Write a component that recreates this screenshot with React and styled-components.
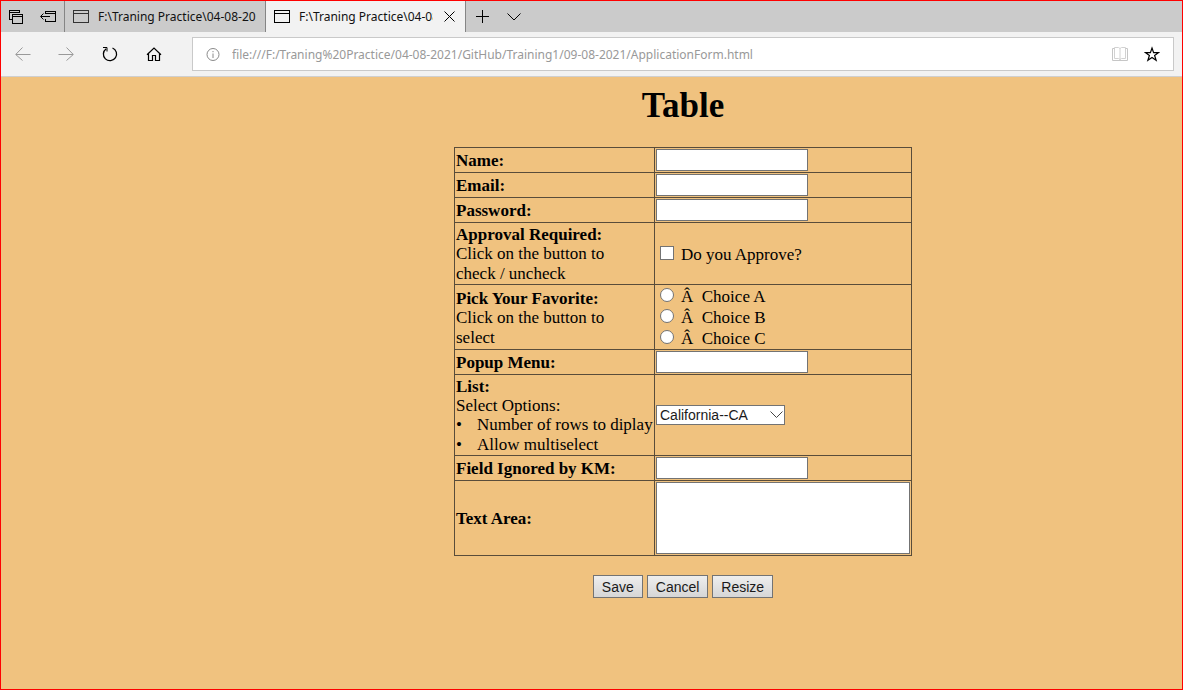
import React from "react";
import styled, { createGlobalStyle } from "styled-components";

const GlobalStyle = createGlobalStyle`
  *, *::before, *::after { box-sizing: border-box; }
  body { margin: 0; }
`;

const uiFont = `"Noto Sans", "Open Sans", sans-serif`;
const formFont = `"Liberation Serif", "Times New Roman", serif`;
const controlFont = `"Liberation Sans", Arial, sans-serif`;

const Window = styled.div`
  min-height: 100vh;
  display: flex;
  flex-direction: column;
  border: 1px solid #ff0000;
  background: #f0c27f;
  overflow: hidden;
`;

const TabStrip = styled.header`
  display: flex;
  height: 31px;
  background: #cbcbcb;
`;

const IconButton = styled.button`
  display: flex;
  align-items: center;
  justify-content: center;
  flex: none;
  width: ${(p) => p.$width || 32}px;
  height: ${(p) => p.$height || 31}px;
  padding: 0;
  border: 0;
  background: none;
  color: ${(p) => p.$color || "#000"};
`;

const Tab = styled.div`
  display: flex;
  align-items: center;
  flex: none;
  width: 201px;
  padding-left: 8px;
  border-left: 1px solid #858585;
  border-right: ${(p) => (p.$active ? "1px solid #858585" : "0")};
  background: ${(p) => (p.$active ? "#f2f2f2" : "#cbcbcb")};
  color: ${(p) => (p.$active ? "#000" : "#333")};
`;

const TabTitle = styled.span`
  width: ${(p) => p.$width}px;
  margin-left: 9px;
  overflow: hidden;
  white-space: nowrap;
  color: #111;
  font: 12px/20px ${uiFont};
`;

const Toolbar = styled.nav`
  display: flex;
  align-items: center;
  height: 45px;
  padding-right: 8px;
  background: #f2f2f2;
  border-bottom: 1px solid #cfcfcf;
`;

const NavButtons = styled.div`
  display: flex;
  flex: none;
  width: 191px;
`;

const AddressBar = styled.div`
  display: flex;
  align-items: center;
  flex: 1;
  min-width: 0;
  height: 34px;
  padding: 0 5px 0 13px;
  border: 1px solid #c9c9c9;
  background: #fff;
`;

const AddressInput = styled.input`
  flex: 1;
  min-width: 0;
  height: 22px;
  margin-left: 12px;
  padding: 0;
  border: 0;
  outline: 0;
  background: none;
  color: #999;
  font: 12px/20px ${uiFont};
`;

const Page = styled.main`
  flex: 1;
  display: flex;
  flex-direction: column;
  align-items: center;
  padding: 8px 0 8px 183px;
  color: #000;
  font: 17px/19px ${formFont};
`;

const Title = styled.h1`
  margin: 0 0 20px;
  font-size: 35px;
  line-height: 42px;
`;

const Form = styled.form`
  display: flex;
  flex-direction: column;
  align-items: center;
  gap: 19px;
`;

const Table = styled.table`
  width: 458px;
  table-layout: fixed;
  border-collapse: collapse;
`;

const Col = styled.col`
  width: ${(p) => p.$width}px;
`;

const HeadCell = styled.th`
  padding: ${(p) => (p.$tall ? "2px 0 0 1px" : "1px 0 1px 1px")};
  border: 1px solid #594c3a;
  font-weight: normal;
  text-align: left;
  vertical-align: middle;
`;

const FieldCell = styled.td`
  padding: ${(p) => (p.$tight ? "0 1px 1px" : "1px")};
  border: 1px solid #594c3a;
  vertical-align: middle;
`;

const FieldName = styled.label`
  display: block;
  font-weight: bold;
`;

const Hint = styled.p`
  margin: 0;
  width: 160px;
  line-height: 20px;
`;

const Options = styled.ul`
  margin: 0;
  padding: 0;
  list-style: none;
  line-height: 20px;
  white-space: nowrap;
`;

const Option = styled.li`
  display: flex;
  &::before {
    content: "•";
    width: 21px;
  }
`;

const TextInput = styled.input`
  display: block;
  width: 152px;
  height: 22px;
  padding: 1px 3px;
  border: 1px solid #737373;
  border-radius: 0;
  outline: 0;
  background: #fff;
  font: 14px ${controlFont};
`;

const TextArea = styled.textarea`
  display: block;
  width: 100%;
  height: 72px;
  border: 1px solid #737373;
  border-radius: 0;
  outline: 0;
  resize: none;
  background: #fff;
  font: 14px ${controlFont};
`;

const Choice = styled.label`
  display: flex;
  align-items: center;
  height: 21px;
  padding: 2px 0 0 4px;
  white-space: pre;
`;

const Tick = styled.input`
  appearance: none;
  flex: none;
  width: 14px;
  height: 14px;
  margin: 0 7px 4px 0;
  border: 1px solid #737373;
  border-radius: ${(p) => (p.type === "radio" ? "50%" : "0")};
  background: #fff;
`;

const SelectBox = styled.div`
  display: grid;
  align-items: center;
  width: 129px;
  height: 20px;
  & > * { grid-area: 1 / 1; }
  & > svg {
    justify-self: end;
    margin-right: 2px;
    pointer-events: none;
  }
`;

const Select = styled.select`
  appearance: none;
  width: 100%;
  height: 20px;
  padding: 0 3px;
  border: 1px solid #737373;
  border-radius: 0;
  background: #fff;
  color: #1a1a1a;
  font: 14px/16px ${controlFont};
`;

const Actions = styled.div`
  display: flex;
  gap: 4px;
`;

const Button = styled.button`
  height: 23px;
  padding: 0 8px;
  border: 1px solid #737373;
  border-radius: 0;
  background: linear-gradient(#eeeeee, #d6d6d6);
  color: #1a1a1a;
  font: 14px/20px ${controlFont};
`;

const Icon = ({ w = 16, h = 16, children, ...rest }) => (
  <svg width={w} height={h} viewBox={`0 0 ${w} ${h}`} fill="none" stroke="currentColor" aria-hidden="true" {...rest}>
    {children}
  </svg>
);

const PageIcon = () => (
  <Icon w={16} h={14} shapeRendering="crispEdges">
    <path d="M.5.5h15v12H.5zM0 3.5h16" />
  </Icon>
);

function Row({ id, name, note, tight, plain, children }) {
  return (
    <tr>
      <HeadCell scope="row" $tall={Boolean(note)}>
        <FieldName as={plain ? "div" : "label"} htmlFor={plain ? undefined : id}>{name}</FieldName>
        {note}
      </HeadCell>
      <FieldCell $tight={tight}>{children}</FieldCell>
    </tr>
  );
}

export default function App() {
  return (
    <Window>
      <GlobalStyle />
      <TabStrip>
        <IconButton $width={30} aria-label="Tabs you've set aside">
          <Icon w={14} h={14} shapeRendering="crispEdges">
            <path d="M3 9.500H.5V.5h10V3M.5 2.500h10M3.500 4.500h10v9h-10zM3.500 6.500h10" />
          </Icon>
        </IconButton>
        <IconButton $width={33} aria-label="Set these tabs aside">
          <Icon w={16} h={12}>
            <path d="M5.500 3V.5h10v10h-10V8M5.500 2.500h10M.5 5.500H10" shapeRendering="crispEdges" />
            <path d="M3.500 2.500l-3 3 3 3" />
          </Icon>
        </IconButton>
        <Tab>
          <PageIcon />
          <TabTitle $width={158}>F:\Traning Practice\04-08-2021</TabTitle>
        </Tab>
        <Tab $active>
          <PageIcon />
          <TabTitle $width={134}>F:\Traning Practice\04-08-2021</TabTitle>
          <IconButton $width={32} aria-label="Close tab">
            <Icon w={11} h={11}><path d="M.5.5l10 10M10.500.5l-10 10" /></Icon>
          </IconButton>
        </Tab>
        <IconButton aria-label="New tab">
          <Icon w={13} h={13} shapeRendering="crispEdges"><path d="M6.500 0v13M0 6.500h13" /></Icon>
        </IconButton>
        <IconButton aria-label="Tab previews">
          <Icon w={14} h={8}><path d="M.5.5L7 7 13.500.5" /></Icon>
        </IconButton>
      </TabStrip>

      <Toolbar>
        <NavButtons>
          <IconButton $width={43} $color="#999" aria-label="Back">
            <Icon w={16} h={14}><path d="M15.500 7.500H1M7.500 .5L.7 7.500l6.800 6" /></Icon>
          </IconButton>
          <IconButton $width={44} $color="#999" aria-label="Forward">
            <Icon w={16} h={14}><path d="M.5 7.500H15M8.500 .5L15.300 7.500l-6.800 6" /></Icon>
          </IconButton>
          <IconButton $width={44} aria-label="Refresh">
            <Icon w={16} h={16}>
              <path d="M4.200 2.700A6.600 6.600 0 1 0 10.500 2" strokeWidth="1.300" />
              <path d="M1 1.500h4v4" />
            </Icon>
          </IconButton>
          <IconButton $width={44} aria-label="Home">
            <Icon w={16} h={16}>
              <path d="M1 8.800L8 2l7 6.800M2.500 7.500v7h4v-5h3v5h4v-7" strokeWidth="1.200" />
            </Icon>
          </IconButton>
        </NavButtons>
        <AddressBar>
          <Icon w={14} h={14} stroke="#8a8a8a">
            <circle cx="7" cy="7.500" r="6" />
            <path d="M7 6.500V11M7 4v1.200" />
          </Icon>
          <AddressInput
            aria-label="Address"
            readOnly
            value="file:///F:/Traning%20Practice/04-08-2021/GitHub/Training1/09-08-2021/ApplicationForm.html"
          />
          <IconButton $color="#c6c6c6" aria-label="Reading view">
            <Icon w={16} h={16}>
              <path d="M2.500 1.500h4L8 2.500l1.500-1h4v11h-4L8 13.500l-1.500-1h-4zM8 2.500v12" stroke="#d2d2d2" />
              <path d="M2.500 2.500h-2v12h15v-12h-2" />
            </Icon>
          </IconButton>
          <IconButton aria-label="Add to favorites">
            <Icon w={16} h={16}>
              <path d="M8 2l1.600 4.600h5L10.600 9.500l1.500 4.800L8 11.400l-4.100 2.900 1.500-4.800L1.400 6.600h5z" strokeWidth="1.200" />
            </Icon>
          </IconButton>
        </AddressBar>
      </Toolbar>

      <Page>
        <Title>Table</Title>
        <Form onSubmit={(e) => e.preventDefault()}>
          <Table>
            <colgroup>
              <Col $width={200} />
              <Col />
            </colgroup>
            <tbody>
              <Row id="name" name="Name:"><TextInput id="name" /></Row>
              <Row id="email" name="Email:"><TextInput id="email" type="email" /></Row>
              <Row id="password" name="Password:"><TextInput id="password" type="password" /></Row>
              <Row id="approve" name="Approval Required:" note={<Hint>Click on the button to check / uncheck</Hint>}>
                <Choice><Tick id="approve" type="checkbox" />Do you Approve?</Choice>
              </Row>
              <Row plain tight name="Pick Your Favorite:" note={<Hint>Click on the button to select</Hint>}>
                {["A", "B", "C"].map((c) => (
                  <Choice key={c}>
                    <Tick type="radio" name="favorite" value={c} />
                    {`Â\u00a0 Choice ${c}`}
                  </Choice>
                ))}
              </Row>
              <Row id="popup" name="Popup Menu:"><TextInput id="popup" /></Row>
              <Row
                id="state"
                name="List:"
                note={
                  <>
                    <div>Select Options:</div>
                    <Options>
                      <Option>Number of rows to diplay</Option>
                      <Option>Allow multiselect</Option>
                    </Options>
                  </>
                }
              >
                <SelectBox>
                  <Select id="state"><option>California--CA</option></Select>
                  <Icon w={13} h={8} stroke="#444"><path d="M.5.5l6 6 6-6" /></Icon>
                </SelectBox>
              </Row>
              <Row id="ignored" name="Field Ignored by KM:"><TextInput id="ignored" /></Row>
              <Row id="area" name="Text Area:"><TextArea id="area" /></Row>
            </tbody>
          </Table>
          <Actions>
            <Button type="submit">Save</Button>
            <Button type="button">Cancel</Button>
            <Button type="button">Resize</Button>
          </Actions>
        </Form>
      </Page>
    </Window>
  );
}
